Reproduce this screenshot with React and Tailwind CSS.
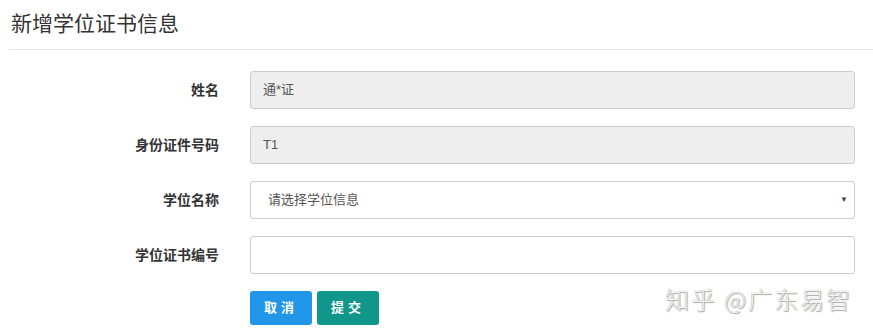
import React from "react";

const font = { fontFamily: '"Liberation Sans", "Noto Sans CJK SC", sans-serif' };

function Row({ label, children }) {
  return (
    <div className="flex items-center h-[38px]">
      <div className="w-[220px] pr-[1px] text-right text-[14px] font-bold text-[#333] leading-none">{label}</div>
      <div className="ml-[30px] flex-1">{children}</div>
    </div>
  );
}

export default function App() {
  return (
    <div className="relative w-[873px] h-[333px] bg-white overflow-hidden" style={font}>
      <div className="pl-[11px] pt-[11px] text-[21px] leading-[26px] text-[#333]">新增学位证书信息</div>
      <div className="ml-[9px] mt-[12px] h-px bg-[#e5e5e5]" />
      <div className="mt-[21px] pr-[18px] flex flex-col gap-[17px]">
        <Row label="姓名">
          <div className="h-[38px] rounded-[3px] border border-[#ccc] bg-[#eee] px-[12px] flex items-center text-[13px] text-[#555]">通*证</div>
        </Row>
        <Row label="身份证件号码">
          <div className="h-[38px] rounded-[3px] border border-[#ccc] bg-[#eee] px-[12px] flex items-center text-[13px] text-[#555]">T1</div>
        </Row>
        <Row label="学位名称">
          <div className="h-[38px] rounded-[3px] border border-[#ccc] bg-white pl-[17px] pr-[6px] flex items-center justify-between text-[13px] text-[#555]">
            <span>请选择学位信息</span>
            <span className="text-[8px] text-[#444]">▼</span>
          </div>
        </Row>
        <Row label="学位证书编号">
          <div className="h-[38px] rounded-[3px] border border-[#ccc] bg-white" />
        </Row>
        <div className="flex gap-[5px] ml-[250px]">
          <button className="w-[62px] h-[34px] rounded-[3px] bg-[#2196e8] text-white text-[13px] font-bold tracking-[4px]">取消</button>
          <button className="w-[62px] h-[34px] rounded-[3px] bg-[#11978a] text-white text-[13px] font-bold tracking-[4px]">提交</button>
        </div>
      </div>
      <div
        className="absolute left-[665px] top-[283px] text-[24px] leading-[32px] font-light text-[#f4f4f4] tracking-[2px] [text-shadow:0_0_1px_#888,1px_1px_1px_#aaa]"
        style={{ fontFamily: '"Noto Sans CJK SC", sans-serif' }}
      >
        知乎 @广东易智
      </div>
    </div>
  );
}
